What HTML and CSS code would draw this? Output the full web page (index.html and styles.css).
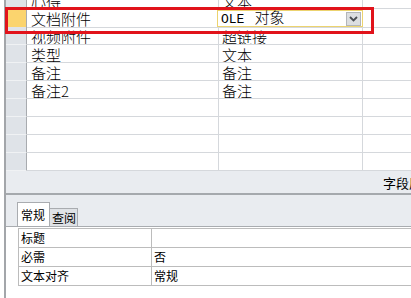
FILE: index.html
```html
<!DOCTYPE html>
<html lang="zh-CN">
<head>
  <meta charset="UTF-8" />
  <title>表设计</title>
  <link rel="stylesheet" href="styles.css">
</head>
<body>
  <div class="designer">
    <div class="grid-pane">
      <div class="grid">
        <div class="row"><div class="sel"></div><div class="name">心得</div><div class="type">文本</div><div class="desc"></div></div>
        <div class="row current">
          <div class="sel"></div>
          <div class="name">文档附件</div>
          <div class="type">
            <div class="combo">
              <span class="combo-text"><span class="latin">OLE</span><span class="cjk">对象</span></span>
              <span class="combo-btn">
                <svg width="9" height="6" viewBox="0 0 9 6"><path d="M1 1 L4.5 4.5 L8 1" fill="none" stroke="#4a4d52" stroke-width="1.8"/></svg>
              </span>
            </div>
          </div>
          <div class="desc"></div>
        </div>
        <div class="row"><div class="sel"></div><div class="name">视频附件</div><div class="type">超链接</div><div class="desc"></div></div>
        <div class="row"><div class="sel"></div><div class="name">类型</div><div class="type">文本</div><div class="desc"></div></div>
        <div class="row"><div class="sel"></div><div class="name">备注</div><div class="type">备注</div><div class="desc"></div></div>
        <div class="row"><div class="sel"></div><div class="name">备注2</div><div class="type">备注</div><div class="desc"></div></div>
        <div class="row"><div class="sel"></div><div class="name"></div><div class="type"></div><div class="desc"></div></div>
        <div class="row"><div class="sel"></div><div class="name"></div><div class="type"></div><div class="desc"></div></div>
        <div class="row"><div class="sel"></div><div class="name"></div><div class="type"></div><div class="desc"></div></div>
        <div class="row"><div class="sel"></div><div class="name"></div><div class="type"></div><div class="desc"></div></div>
      </div>
    </div>

    <div class="props-bar"><span>字段属性</span></div>

    <div class="props-pane">
      <div class="tabs">
        <span class="tab active">常规</span>
        <span class="tab">查阅</span>
      </div>
      <div class="props">
        <div class="prop"><div class="label">标题</div><div class="value"></div></div>
        <div class="prop"><div class="label">必需</div><div class="value">否</div></div>
        <div class="prop"><div class="label">文本对齐</div><div class="value">常规</div></div>
      </div>
    </div>

    <div class="mark"></div>
  </div>
</body>
</html>
```

FILE: styles.css
```css
:root {
  --grid-line: #d5d8dc;
  --sel-bg: #dfe3e8;
  --sel-current: #fbd46e;
  --pane-bg: #e9ecf0;
  --prop-line: #bcbcbc;
  --mark: #e1131b;
}
body {
  margin: 0;
  width: 411px;
  height: 298px;
  overflow: hidden;
  background: #fff;
  color: #000;
  font-family: "Noto Sans CJK SC", sans-serif;
}
.designer {
  position: relative;
  margin-left: 4px;
  border-left: 2px solid #a3a6aa;
  height: 298px;
  display: flex;
  flex-direction: column;
}
.grid-pane {
  height: 171px;
  overflow: hidden;
  flex: none;
}
.grid {
  margin-top: -9px;
}
.row {
  display: grid;
  grid-template-columns: 21px 192px 144px 1fr;
  height: 18px;
}
.row > div {
  box-sizing: border-box;
  border-bottom: 1px solid var(--grid-line);
  border-right: 1px solid var(--grid-line);
  font-size: 15px;
  font-weight: 300;
  line-height: 19px;
  white-space: nowrap;
  overflow: hidden;
}
.row .sel {
  background: var(--sel-bg);
  border-right-color: #a8abaf;
  border-bottom-color: #f0f2f4;
}
.row.current .sel {
  background: var(--sel-current);
}
.name {
  padding-left: 4px;
}
.type {
  padding-left: 3px;
}
.row .desc {
  border-right: none;
}
.row.current .type {
  padding-left: 0;
  overflow: visible;
}
.combo {
  box-sizing: border-box;
  height: 17px;
  margin: 1px -1px 0 -2px;
  border: 1px solid #ecd36f;
  display: flex;
  align-items: center;
  padding-left: 3px;
  background: #fff;
}
.combo-text {
  line-height: 16px;
}
.latin {
  font-family: "Liberation Mono", monospace;
  font-size: 13px;
}
.cjk {
  margin-left: 10px;
}
.combo-btn {
  margin-left: auto;
  margin-right: 1px;
  width: 15px;
  height: 14px;
  box-sizing: border-box;
  border: 1px solid #b3b6ba;
  background: #dcdee1;
  display: flex;
  align-items: center;
  justify-content: center;
}
.props-bar {
  flex: none;
  height: 22px;
  background: var(--pane-bg);
  border-bottom: 2px solid #a5a9ad;
  display: flex;
  align-items: center;
  justify-content: flex-end;
  font-size: 13px;
  white-space: nowrap;
  overflow: hidden;
}
.props-bar span {
  margin-right: -24px;
}
.props-pane {
  flex: 1;
  background: #fff;
}
.tabs {
  height: 31px;
  background: var(--pane-bg);
  border-bottom: 1px solid #a9acb0;
  display: flex;
  align-items: flex-end;
  padding-left: 11px;
  margin-bottom: 1px;
}
.tab {
  box-sizing: border-box;
  height: 18px;
  padding: 0 1px 0 2px;
  font-size: 12px;
  line-height: 18px;
  background: #dfe2e6;
  border: 1px solid #a9acb0;
  border-bottom: none;
  border-left: none;
}
.tab.active {
  height: 24px;
  padding: 4px 4px 0 3px;
  line-height: 16px;
  background: #fff;
  border-left: 1px solid #a9acb0;
}
.props {
  margin-left: 12px;
  border-left: 1px solid var(--prop-line);
  border-top: 1px solid var(--prop-line);
}
.prop {
  display: grid;
  grid-template-columns: 133px 1fr;
  height: 19px;
}
.prop > div {
  box-sizing: border-box;
  border-bottom: 1px solid var(--prop-line);
  font-size: 12px;
  line-height: 18px;
  padding-left: 2px;
}
.prop .label {
  border-right: 1px solid var(--prop-line);
}
.mark {
  position: absolute;
  left: -1px;
  top: 7px;
  width: 369px;
  height: 27px;
  box-sizing: border-box;
  border: 3px solid var(--mark);
}
```
